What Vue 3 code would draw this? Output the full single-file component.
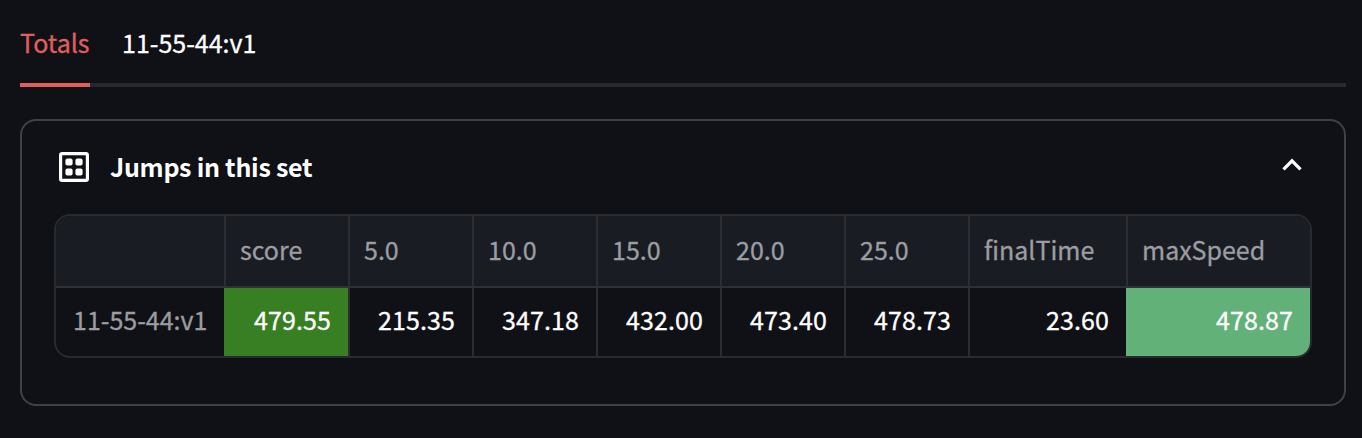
<script setup>
const columns = [
  { name: 'score', value: '479.55', tone: 'best' },
  { name: '5.0', value: '215.35' },
  { name: '10.0', value: '347.18' },
  { name: '15.0', value: '432.00' },
  { name: '20.0', value: '473.40' },
  { name: '25.0', value: '478.73' },
  { name: 'finalTime', value: '23.60' },
  { name: 'maxSpeed', value: '478.87', tone: 'speed' },
]
</script>

<template>
  <main class="page">
    <nav class="tabs">
      <a class="tab active">Totals</a>
      <a class="tab">11-55-44:v1</a>
    </nav>
    <section class="panel">
      <header class="panel-head">
        <svg class="grid-icon" viewBox="0 0 30 30" width="30" height="30">
          <rect x="1.6" y="1.6" width="26.8" height="26.8" rx="1.6" fill="none" stroke="#fff" stroke-width="3.2" />
          <rect x="6.4" y="6.4" width="7.2" height="7.2" rx="2" fill="#fff" />
          <rect x="16.4" y="6.4" width="7.2" height="7.2" rx="2" fill="#fff" />
          <rect x="6.4" y="16.4" width="7.2" height="7.2" rx="2" fill="#fff" />
          <rect x="16.4" y="16.4" width="7.2" height="7.2" rx="2" fill="#fff" />
        </svg>
        <h2 class="title">Jumps in this set</h2>
        <svg class="chevron" viewBox="0 0 20 14" width="20" height="14">
          <path d="M1.5 11.4 L10 2.9 L18.5 11.4" fill="none" stroke="#fff" stroke-width="3.3" />
        </svg>
      </header>
      <div class="table">
        <div class="row head">
          <div class="cell"></div>
          <div v-for="c in columns" :key="c.name" class="cell">{{ c.name }}</div>
        </div>
        <div class="row body">
          <div class="cell index">11-55-44:v1</div>
          <div v-for="c in columns" :key="c.name" class="cell value" :class="c.tone">{{ c.value }}</div>
        </div>
      </div>
    </section>
  </main>
</template>

<style>
body {
  background: #101116;
}
</style>

<style scoped>
.page {
  box-sizing: border-box;
  height: 438px;
  padding: 0 16px 0 20px;
  overflow: hidden;
  background: #101116;
  color: #fff;
  font-family: "Noto Sans CJK SC", "Noto Sans", sans-serif;
  font-size: 25px;
  line-height: 36px;
  -webkit-text-stroke: 0.3px currentColor;
}
.tabs {
  box-sizing: border-box;
  display: flex;
  gap: 32px;
  height: 87px;
  box-shadow: inset 0 -4px #28292e;
}
.tab {
  box-sizing: border-box;
  height: 87px;
  padding-top: 24px;
  white-space: nowrap;
}
.tab.active {
  width: 70px;
  color: #e05f5c;
  border-bottom: 4px solid #e05f5c;
}
.panel {
  box-sizing: border-box;
  height: 287px;
  margin-top: 32px;
  padding: 0 32px;
  border: 2px solid #404146;
  border-radius: 16px;
}
.panel-head {
  box-sizing: border-box;
  display: flex;
  align-items: center;
  height: 93px;
  padding: 0 10px 2px 5px;
}
.title {
  flex: 1;
  margin: -2px 0 0 21px;
  font-size: 25px;
  font-weight: 700;
  letter-spacing: -0.27px;
  -webkit-text-stroke: 0;
}
.chevron {
  margin-top: -3px;
}
.table {
  box-sizing: border-box;
  height: 144px;
  border: 2px solid #292a2f;
  border-radius: 16px;
  overflow: hidden;
}
.row {
  display: grid;
  grid-template-columns: 170px repeat(6, 124px) 158px 182px;
}
.head {
  height: 70px;
  background: #1a1c24;
  color: #9c9da1;
  border-bottom: 2px solid #303137;
}
.body {
  height: 68px;
}
.cell {
  box-sizing: border-box;
  padding: 15px 17px 0 14px;
  border-right: 2px solid #2c2d33;
  white-space: nowrap;
}
.cell:last-child {
  border-right: 0;
}
.cell.index {
  padding: 13px 0 0 17px;
  color: #9c9da1;
}
.cell.value {
  padding-top: 13px;
  text-align: right;
  letter-spacing: 0.1px;
}
.cell.best,
.cell.speed {
  margin-left: -2px;
}
.cell.best {
  background: #387e22;
}
.cell.speed {
  background: #62b179;
}
</style>
